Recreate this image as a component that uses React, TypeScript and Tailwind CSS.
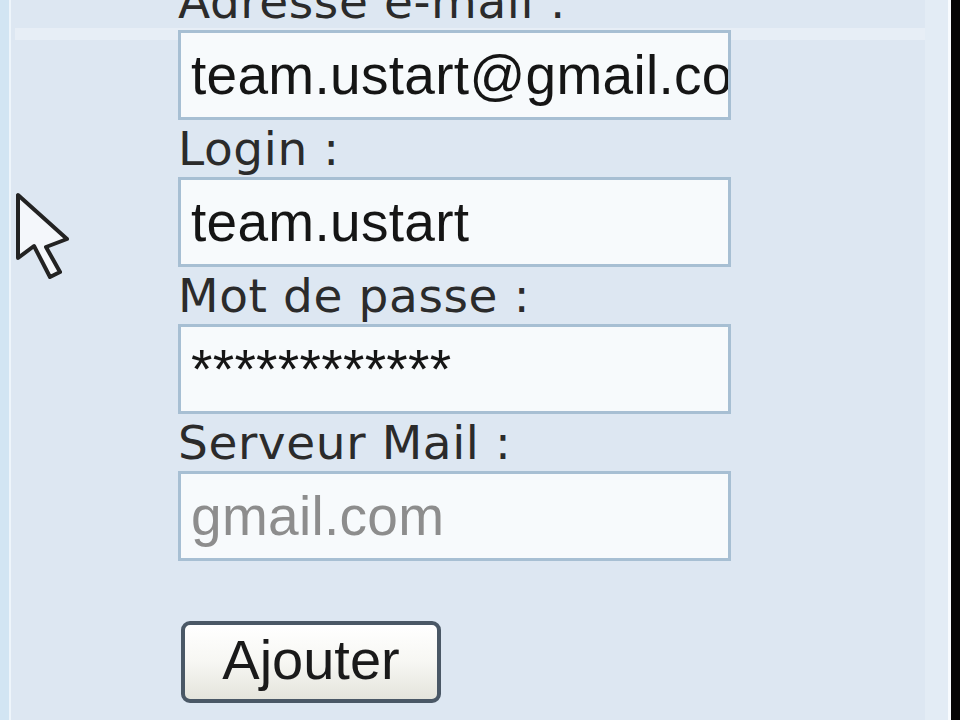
const labelCls =
  "h-[57px] leading-[57px] text-[47px] tracking-[0.6px] text-[#2b2b2b] whitespace-nowrap [font-family:'DejaVu_Sans',Verdana,sans-serif]";

const fieldCls =
  "h-[90px] w-[553px] overflow-hidden whitespace-nowrap border-[3px] border-[#a7bfd3] bg-[#f7fafc] pl-[10px] pt-[11px] text-[55px] leading-[1.15] tracking-[0.3px] [font-family:'Liberation_Sans',Arial,sans-serif]";

type FieldProps = {
  label: string;
  value: string;
  muted?: boolean;
};

const Field = ({ label, value, muted }: FieldProps) => (
  <div className="flex flex-col">
    <div className={labelCls}>{label}</div>
    <div className={`${fieldCls} ${muted ? "text-[#8d8d8d]" : "text-[#151515]"}`}>
      {value}
    </div>
  </div>
);

// mouse pointer sitting on the left margin
const Pointer = () => (
  <svg
    className="absolute left-0 top-0"
    width="80"
    height="300"
    viewBox="0 0 80 300"
  >
    <polygon
      points="18,195 18,258 34,246 50,277 60,272 46,247 67,239"
      fill="#f4f7fb"
      stroke="#232323"
      strokeWidth="4"
      strokeLinejoin="round"
    />
  </svg>
);

export default function App() {
  return (
    <div className="relative flex h-[720px] w-[960px] overflow-hidden bg-[#dde7f2]">
      {/* left frame edge */}
      <div className="w-[9px] bg-[#d2e5f3]" />
      <div className="w-[2px] bg-[#eef5fb]" />

      <div className="relative flex-1">
        <div className="absolute left-[4px] right-0 top-[28px] h-[12px] bg-[#e7eef6]" />

        <div className="relative -mt-[27px] flex flex-col pl-[167px]">
          <Field label="Adresse e-mail :" value="team.ustart@gmail.com" />
          <Field label="Login :" value="team.ustart" />
          <Field label="Mot de passe :" value="************" />
          <Field label="Serveur Mail :" value="gmail.com" muted />

          <button className="mt-[60px] ml-[3px] flex h-[82px] w-[260px] items-center justify-center rounded-[9px] border-[4px] border-[#4a5866] bg-gradient-to-b from-[#ffffff] via-[#f7f7f3] to-[#e4e4dc] pb-[4px] text-[56px] text-[#1a1a1a] [font-family:'Liberation_Sans',Arial,sans-serif]">
            Ajouter
          </button>
        </div>
      </div>

      {/* right frame edge */}
      <div className="w-[23px] bg-[#e3ecf5]" />
      <div className="w-[3px] bg-[#f8fbfe]" />
      <div className="w-[9px] bg-[#050505]" />

      <Pointer />
    </div>
  );
}
